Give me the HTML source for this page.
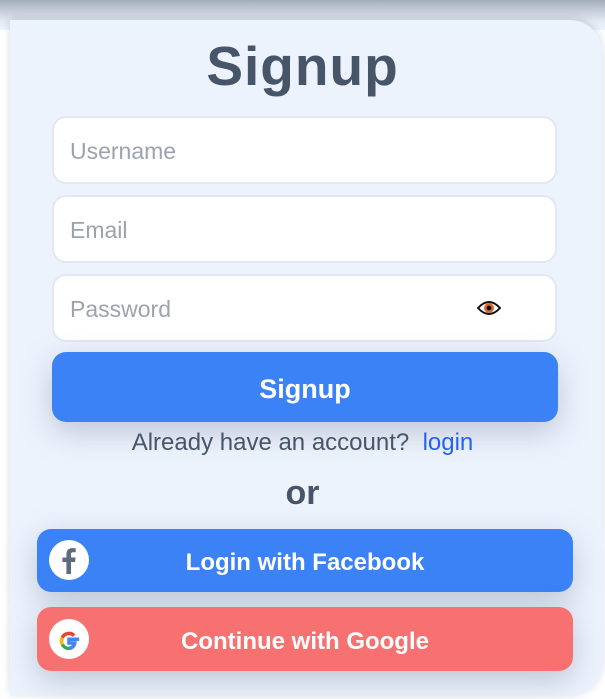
<!DOCTYPE html>
<html><head><style>
*{box-sizing:border-box;margin:0;padding:0}
body{width:605px;height:699px;overflow:hidden;background:#fff;font-family:"Liberation Sans","DejaVu Sans",sans-serif;position:relative}
.top{position:absolute;left:0;top:0;width:605px;height:30px;background:linear-gradient(#a4aebb,#e4eaf3 70%,#eef4fe)}
.card{position:absolute;left:10px;top:20px;width:592px;height:676px;background:#edf3fd;border-radius:0 32px 32px 0;box-shadow:0 -2px 8px rgba(100,110,130,.25)}
h1{position:absolute;left:0;width:605px;top:34px;text-align:center;font-size:55px;font-weight:bold;color:#475569;letter-spacing:1px}
.in{position:absolute;left:52px;width:505px;height:68px;background:#fff;border:2px solid #e2e8f0;border-radius:14px;font-size:23px;color:#9ca3af;padding-left:16px;line-height:66px}
.btn{position:absolute;border-radius:14px;color:#fff;font-weight:bold;text-align:center}
.ic{position:absolute;left:12px;width:40px;height:40px;border-radius:50%;background:#fff}
.txt{position:absolute;left:0;width:605px;text-align:center;color:#475569}
</style></head><body>
<div class="top"></div>
<div class="card"></div>
<h1>Signup</h1>
<div class="in" style="top:116px">Username</div>
<div class="in" style="top:195px">Email</div>
<div class="in" style="top:274px">Password
<svg style="position:absolute;left:423px;top:23px" width="24" height="18" viewBox="0 0 24 18"><path d="M1 9Q12-3 23 9Q12 21 1 9Z" fill="#fff" stroke="#111" stroke-width="2"/><circle cx="12" cy="9" r="5" fill="#d9652a"/><circle cx="12" cy="9" r="2.3" fill="#000"/></svg></div>
<div class="btn" style="left:52px;top:352px;width:506px;height:70px;background:#3b82f6;font-size:27px;line-height:74px;box-shadow:0 10px 30px rgba(100,116,139,.35)">Signup</div>
<div class="txt" style="top:429px;font-size:24px">Already have an account?&nbsp; <span style="color:#2563eb">login</span></div>
<div class="txt" style="top:474px;font-size:34px;font-weight:bold">or</div>
<div class="btn" style="left:37px;top:529px;width:536px;height:63px;background:#3b82f6;font-size:24px;line-height:68px;box-shadow:0 10px 30px rgba(100,116,139,.35)">
<div class="ic" style="top:11px"><svg width="40" height="40" viewBox="0 0 40 40"><path d="M22 33V21h4l.6-4.5H22v-3c0-1.3.4-2.2 2.3-2.2h2.4V7.3a32 32 0 0 0-3.5-.2c-3.5 0-5.8 2.1-5.8 6v3.4h-4V21h4v12z" fill="#5d6b82"/></svg></div>Login with Facebook</div>
<div class="btn" style="left:37px;top:607px;width:536px;height:64px;background:#f87171;font-size:24px;line-height:69px;box-shadow:0 10px 30px rgba(100,116,139,.35)">
<div class="ic" style="top:12px"><svg width="40" height="40" viewBox="0 0 40 40"><g transform="translate(20 20) scale(1.35) translate(-20 -20)"><path d="M27.5 18.7H20v2.8h4.3a4.8 4.8 0 0 1-4.3 4" fill="none" stroke="#4285f4" stroke-width="2.6"/><path d="M20 25.5a5.5 5.5 0 0 1-5-3" fill="none" stroke="#34a853" stroke-width="2.6"/><path d="M15 22.5a5.5 5.5 0 0 1 0-5" fill="none" stroke="#fbbc05" stroke-width="2.6"/><path d="M15 17.5a5.5 5.5 0 0 1 8.8-1.5" fill="none" stroke="#ea4335" stroke-width="2.6"/></g></svg></div>Continue with Google</div>
</body></html>
